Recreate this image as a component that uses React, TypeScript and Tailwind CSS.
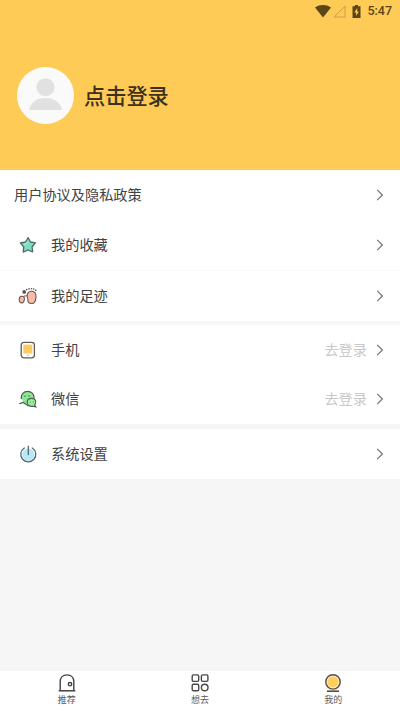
import { ReactNode } from "react";

const StarIcon = () => (
  <svg width="18" height="18" viewBox="0 0 18 18" fill="none">
    <path
      d="M9.200 1.700l2.300 4.300 5 .9-3.400 3.900.6 5.100-4.700-1.900-4.800 2.100.5-5.200-3.300-3.900 5.200-1z"
      fill="#7fdcc0"
      stroke="#4d6b66"
      strokeWidth="1.300"
      strokeLinejoin="round"
    />
    <path d="M5 8.500l2.600-.8 1.300-2" stroke="#d5f7ec" strokeWidth=".8" />
  </svg>
);

const FootIcon = () => (
  <svg width="20" height="18" viewBox="0 0 20 18" fill="none" className="-ml-px">
    <path
      d="M13.400 4.200c2.900 0 4.600 2.200 4.600 5.200 0 4-1.500 7.100-4.500 7.100-2.400 0-3.700-1.700-3.700-3.800 0-1.200-.4-2-.6-3.200-.5-2.800 1.300-5.300 4.200-5.300z"
      fill="#f8bda8"
      stroke="#6b5550"
      strokeWidth="1.100"
    />
    <path
      d="M3.700 9.200c1.900-.2 2.900 1 2.700 2.700-.2 1.900-.6 4-2.300 4-2.100 0-2.900-1.600-2.900-3.500 0-1.700.9-3 2.500-3.200z"
      fill="#f8bda8"
      stroke="#6b5550"
      strokeWidth="1.100"
    />
    <path d="M5.400 9.600c1-1 2.200-.3 3.600-1" stroke="#6b5550" strokeWidth="1" />
    <g fill="#5c5553">
      <circle cx="6.200" cy="4.900" r="1.900" />
      <circle cx="8.700" cy="2.600" r=".8" />
      <circle cx="11.100" cy="1.900" r=".8" />
      <circle cx="13.500" cy="1.700" r=".8" />
      <circle cx="15.800" cy="2.100" r=".8" />
      <circle cx="17.800" cy="3.400" r=".8" />
    </g>
  </svg>
);

const PhoneIcon = () => (
  <svg width="18" height="18" viewBox="0 0 18 18" fill="none">
    <rect x="2.200" y="1.300" width="13.200" height="15.600" rx="2.800" fill="#fff" stroke="#605c58" strokeWidth="1.300" />
    <rect x="4.300" y="3.600" width="9" height="8.900" fill="#fccb60" />
    <circle cx="8.800" cy="14.400" r=".9" fill="#f0bd58" />
  </svg>
);

const WechatIcon = () => (
  <svg width="18" height="18" viewBox="0 0 18 18" fill="none">
    <ellipse cx="8.500" cy="7.800" rx="5.800" ry="6" fill="#8ce695" />
    <path
      d="M2.300 8.500C1.900 4.600 4.800 1.300 8.600 1.300c3.700 0 6.400 2.800 6.500 6.500M.8 13.600l3.400-1.200 5.200 3.300"
      stroke="#46604b"
      strokeWidth="1.300"
      strokeLinecap="round"
    />
    <path
      d="M12.500 8.400c2.400 0 4.200 1.600 4.200 3.800 0 1.100-.4 2-1.200 2.700l1.300 2-3.100-.7c-3 .7-5.500-1.200-5.500-4 0-2.200 1.900-3.800 4.300-3.800z"
      fill="#9aee9c"
      stroke="#46604b"
      strokeWidth="1.100"
    />
    <g fill="#3f7548">
      <circle cx="6" cy="6.300" r=".8" />
      <circle cx="10" cy="6" r=".8" />
      <circle cx="11.300" cy="12" r=".6" />
      <circle cx="14.100" cy="12" r=".6" />
    </g>
  </svg>
);

const PowerIcon = () => (
  <svg width="18" height="18" viewBox="0 0 18 18" fill="none">
    <circle cx="9.300" cy="9.600" r="6.200" fill="#b5e9f7" />
    <path
      d="M5.300 3a7.500 7.500 0 1 0 8 0M9.300 1.200v8.300"
      stroke="#5b676c"
      strokeWidth="1.300"
      strokeLinecap="round"
    />
  </svg>
);

const DoorIcon = () => (
  <svg width="18" height="18" viewBox="0 0 18 18" fill="none" stroke="#45413f" strokeWidth="1.400">
    <path d="M2.200 16V7.700C2.200 3.700 4.900.9 9 .9s6.800 2.800 6.800 6.800V16" />
    <path d="M.7 16.800h16.600" strokeWidth="1.500" />
    <circle cx="12" cy="10.200" r="1.700" strokeWidth="1.400" />
  </svg>
);

const GridIcon = () => (
  <svg width="18" height="18" viewBox="0 0 18 18" fill="none" stroke="#4b4947" strokeWidth="1.400">
    <rect x="1.200" y=".9" width="6.500" height="6.500" rx="1.300" />
    <rect x="10.400" y=".9" width="6.500" height="6.500" rx="1.300" />
    <rect x="1.200" y="10.200" width="6.500" height="6.500" rx="1.300" />
    <circle cx="13.700" cy="13.500" r="3.300" />
  </svg>
);

const MineIcon = () => (
  <svg width="18" height="18" viewBox="0 0 18 18" fill="none">
    <circle cx="9" cy="7.900" r="7.200" fill="#fff2cf" stroke="#5a4c3b" strokeWidth="1.400" />
    <circle cx="9" cy="7.900" r="5.500" fill="#fdce5b" />
    <path d="M3 17.200h12" stroke="#5a4c3b" strokeWidth="1.600" />
  </svg>
);

const Chevron = () => (
  <svg width="8" height="12" viewBox="0 0 8 12" fill="none" className="shrink-0">
    <path d="M1.200 .8l5.200 5.200-5.200 5.200" stroke="#737373" strokeWidth="1.200" />
  </svg>
);

const StatusBar = () => (
  <div className="flex h-[22px] items-center justify-end pr-2 text-[#5a4619]">
    <svg width="16" height="13" viewBox="0 0 16 13" className="mr-[2px]">
      <path d="M0 2.500C4.500-.8 11.500-.8 16 2.500L8 12.500z" fill="currentColor" />
    </svg>
    <svg width="13" height="13" viewBox="0 0 13 13" fill="none" className="mr-[6px]">
      <path d="M12 1.200V12H1.200z" stroke="#c99d44" strokeWidth="1" />
    </svg>
    <svg width="9" height="13" viewBox="0 0 9 13" className="mr-[6px]">
      <path d="M3 0h3v1.300h2.500V13H.5V1.300H3z" fill="currentColor" />
      <path d="M5.200 3L2.300 7.600h1.800V11l2.700-4.600H5.200z" fill="#ffcb57" />
    </svg>
    <span className="pt-px font-[Roboto,sans-serif] text-[12.500px] leading-none font-medium">
      5:47
    </span>
  </div>
);

const Row = ({
  icon,
  title,
  hint,
}: {
  icon?: ReactNode;
  title: string;
  hint?: string;
}) => (
  <div className="flex h-[50px] items-center bg-white pr-4 pl-[14px]">
    {icon && <span className="mr-[14px] ml-[5px] w-[18px]">{icon}</span>}
    <span className="pb-[2px] text-[14.200px] leading-5">{title}</span>
    <span className="mr-[9px] ml-auto pb-[2px] text-[14.200px] leading-5 text-[#c8c8c8]">
      {hint}
    </span>
    <Chevron />
  </div>
);

const tabs = [
  { title: "推荐", icon: <DoorIcon /> },
  { title: "想去", icon: <GridIcon /> },
  { title: "我的", icon: <MineIcon /> },
];

export default function App() {
  return (
    <main className="flex h-[711px] w-[400px] flex-col overflow-hidden bg-[#f6f6f6] font-['Noto_Sans_CJK_SC',sans-serif] text-[#424242]">
      <header className="h-[170px] shrink-0 bg-[#ffcb57]">
        <StatusBar />
        <div className="flex items-center pt-[45px] pl-[17px]">
          <div className="flex size-[57px] items-center justify-center rounded-full bg-[#fafafa] pb-[3px]">
            <svg width="33" height="32" viewBox="0 0 33 32" fill="#e1e1e1">
              <circle cx="16.500" cy="9.200" r="9" />
              <path d="M0 32c1.500-7.500 7.500-12 16.500-12S31.500 24.500 33 32z" />
            </svg>
          </div>
          <span className="ml-[10px] pb-[2px] text-[21.200px] leading-8 font-medium text-[#3c321e]">
            点击登录
          </span>
        </div>
      </header>

      <section>
        <Row title="用户协议及隐私政策" />
        <Row icon={<StarIcon />} title="我的收藏" />
        <div className="h-px bg-[#fafafa]"></div>
        <Row icon={<FootIcon />} title="我的足迹" />
      </section>
      <section className="mt-1 -mb-px">
        <Row icon={<PhoneIcon />} title="手机" hint="去登录" />
        <div className="-mt-px">
          <Row icon={<WechatIcon />} title="微信" hint="去登录" />
        </div>
      </section>
      <section className="mt-[6px]">
        <Row icon={<PowerIcon />} title="系统设置" />
      </section>

      <nav className="mt-auto grid h-10 grid-cols-3 bg-white">
        {tabs.map((tab) => (
          <div key={tab.title} className="flex flex-col items-center pt-[3px]">
            {tab.icon}
            <span className="pt-px text-[9px] leading-[14px] text-[#5c5c5c]">{tab.title}</span>
          </div>
        ))}
      </nav>
    </main>
  );
}
